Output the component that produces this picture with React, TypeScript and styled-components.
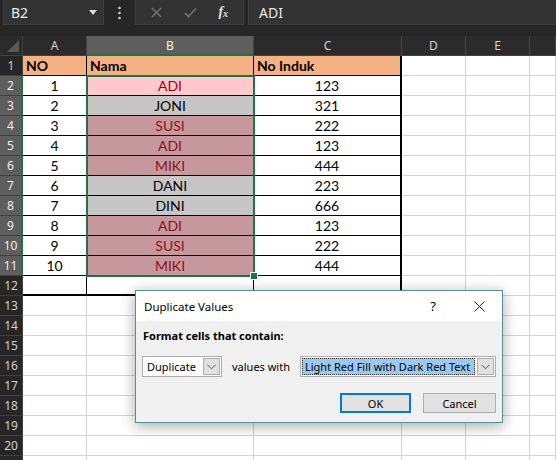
import React from 'react'
import styled, { createGlobalStyle } from 'styled-components'

const GlobalStyle = createGlobalStyle`
  html, body { margin: 0; padding: 0; background: #fff; }
  body { overflow: hidden; }
`

const Page = styled.div`
  width: 556px;
  height: 460px;
  position: relative;
  overflow: hidden;
  background: #fff;
  font-family: Lato, "Liberation Sans", sans-serif;
`

/* formula bar */
const FormulaBar = styled.div`
  height: 36px;
  background: #262626;
  display: flex;
  align-items: flex-start;
  padding-left: 3px;
  box-sizing: border-box;
  font-family: "Noto Sans", sans-serif;
`
const NameBox = styled.div`
  width: 101px;
  height: 25px;
  box-sizing: border-box;
  background: #333;
  border: 1px solid #3d3d3d;
  border-top: none;
  display: flex;
  align-items: center;
  justify-content: space-between;
  padding: 0 6px 0 7px;
  color: #e8e8e8;
  font-size: 14px;
`
const Kebab = styled.div`
  width: 31px;
  height: 25px;
  display: flex;
  align-items: center;
  justify-content: center;
`
const FxGroup = styled.div`
  width: 109px;
  height: 25px;
  box-sizing: border-box;
  background: #333;
  border: 1px solid #3d3d3d;
  border-top: none;
  display: flex;
  align-items: center;
  justify-content: space-around;
  padding: 0 4px;
`
const FxText = styled.span`
  font-family: "Liberation Serif", serif;
  font-style: italic;
  font-weight: bold;
  color: #e0e0e0;
  font-size: 14px;
  sub { font-size: 10px; vertical-align: -1px; }
`
const FormulaInput = styled.div`
  flex: 1;
  margin-left: 4px;
  height: 25px;
  box-sizing: border-box;
  background: #333;
  border-left: 1px solid #3d3d3d;
  border-bottom: 1px solid #3d3d3d;
  display: flex;
  align-items: center;
  padding-left: 10px;
  color: #e8e8e8;
  font-size: 14px;
`

/* sheet */
const Sheet = styled.div`
  position: relative;
  display: grid;
  grid-template-columns: 23px 64px 167px 148px 64px 64px 1fr;
  grid-auto-rows: 20px;
`
const Corner = styled.div`
  background: #2b2b2b;
  border-right: 1px solid #3f3f3f;
  border-bottom: 1px solid #3f3f3f;
  box-sizing: border-box;
  display: flex;
  align-items: flex-end;
  justify-content: flex-end;
  padding: 0 3px 3px 0;
`
const ColHead = styled.div<{ $selected?: boolean }>`
  box-sizing: border-box;
  background: ${(p) => (p.$selected ? '#5e5e5e' : '#2b2b2b')};
  color: ${(p) => (p.$selected ? '#f4f4f4' : '#d2d2d2')};
  border-right: 1px solid #444;
  border-bottom: ${(p) => (p.$selected ? '2px solid #217346' : '1px solid #3f3f3f')};
  display: flex;
  align-items: center;
  justify-content: center;
  font-family: "Noto Sans", sans-serif;
  font-size: 12px;
`
const RowHead = styled.div<{ $selected?: boolean }>`
  box-sizing: border-box;
  background: ${(p) => (p.$selected ? '#5e5e5e' : '#262626')};
  color: ${(p) => (p.$selected ? '#f0f0f0' : '#cfcfcf')};
  border-right: ${(p) => (p.$selected ? '2px solid #217346' : '1px solid #3f3f3f')};
  border-bottom: 1px solid #404040;
  display: flex;
  align-items: center;
  justify-content: center;
  font-family: "Noto Sans", sans-serif;
  font-size: 12px;
`
const Cell = styled.div<{
  $fill?: string
  $color?: string
  $align?: 'left' | 'center'
  $bold?: boolean
  $table?: boolean
  $thickRight?: boolean
  $thickBottom?: boolean
}>`
  box-sizing: border-box;
  background: ${(p) => p.$fill || '#fff'};
  color: ${(p) => p.$color || '#000'};
  font-weight: ${(p) => (p.$bold ? 700 : 400)};
  font-size: 14px;
  display: flex;
  align-items: center;
  justify-content: ${(p) => (p.$align === 'left' ? 'flex-start' : 'center')};
  padding-left: ${(p) => (p.$align === 'left' ? '3px' : '0')};
  border-right: ${(p) =>
    p.$thickRight ? '2px solid #000' : p.$table ? '1px solid #000' : '1px solid #d4d4d4'};
  border-bottom: ${(p) =>
    p.$thickBottom ? '2px solid #000' : p.$table ? '1px solid #000' : '1px solid #d4d4d4'};
  white-space: nowrap;
  overflow: hidden;
`
const Selection = styled.div`
  position: absolute;
  left: 86px;
  top: 39px;
  width: 169px;
  height: 202px;
  box-sizing: border-box;
  border: 2px solid #217346;
  pointer-events: none;
`
const FillHandle = styled.div`
  position: absolute;
  right: -5px;
  bottom: -5px;
  width: 6px;
  height: 6px;
  background: #217346;
  border: 1px solid #fff;
`

/* dialog */
const Dialog = styled.div`
  position: absolute;
  left: 135px;
  top: 290px;
  width: 368px;
  height: 133px;
  box-sizing: border-box;
  border: 1px solid #548f98;
  background: #f0f0f0;
  box-shadow: 0 3px 14px rgba(0, 0, 0, 0.35);
  display: flex;
  flex-direction: column;
  font-family: "Noto Sans", sans-serif;
  font-size: 11px;
  color: #000;
`
const TitleBar = styled.div`
  height: 30px;
  flex-shrink: 0;
  background: #fff;
  display: flex;
  align-items: center;
  padding-left: 8px;
`
const Title = styled.div`
  flex: 1;
  font-size: 11.5px;
`
const TitleBtn = styled.div`
  width: 46px;
  height: 30px;
  display: flex;
  align-items: center;
  justify-content: center;
  font-size: 13px;
`
const Body = styled.div`
  flex: 1;
  display: flex;
  flex-direction: column;
  padding: 7px 6px 0 6px;
`
const Label = styled.div`
  font-weight: 700;
  padding-left: 1px;
  line-height: 16px;
`
const FieldRow = styled.div`
  margin-top: 12px;
  display: flex;
  align-items: center;
`
const Select = styled.div<{ $width: number }>`
  width: ${(p) => p.$width}px;
  height: 21px;
  box-sizing: border-box;
  background: #fff;
  border: 1px solid #adadad;
  display: flex;
  align-items: stretch;
  padding: 1px;
`
const SelectValue = styled.div<{ $highlight?: boolean }>`
  flex: 1;
  display: flex;
  align-items: center;
  padding-left: 3px;
  margin-right: 2px;
  background: ${(p) => (p.$highlight ? '#99c9ef' : 'transparent')};
  outline: ${(p) => (p.$highlight ? '1px dotted #333' : 'none')};
  outline-offset: -1px;
  white-space: nowrap;
`
const DropBtn = styled.div`
  width: 17px;
  box-sizing: border-box;
  background: #e1e1e1;
  border: 1px solid #adadad;
  display: flex;
  align-items: center;
  justify-content: center;
`
const InlineText = styled.span`
  margin: 0 10px;
`
const ButtonRow = styled.div`
  margin-top: 16px;
  display: flex;
  justify-content: flex-end;
  gap: 12px;
`
const Button = styled.div<{ $primary?: boolean; $width: number }>`
  width: ${(p) => p.$width}px;
  height: 20px;
  box-sizing: border-box;
  background: #e1e1e1;
  border: ${(p) => (p.$primary ? '2px solid #0078d7' : '1px solid #adadad')};
  display: flex;
  align-items: center;
  justify-content: center;
`

const Chevron = () => (
  <svg width="9" height="6" viewBox="0 0 9 6">
    <polyline points="0.5,0.8 4.5,4.8 8.5,0.8" fill="none" stroke="#555" strokeWidth="1" />
  </svg>
)

type Kind = 'active' | 'plain' | 'dup'
const data: [number, string, number, Kind][] = [
  [1, 'ADI', 123, 'active'],
  [2, 'JONI', 321, 'plain'],
  [3, 'SUSI', 222, 'dup'],
  [4, 'ADI', 123, 'dup'],
  [5, 'MIKI', 444, 'dup'],
  [6, 'DANI', 223, 'plain'],
  [7, 'DINI', 666, 'plain'],
  [8, 'ADI', 123, 'dup'],
  [9, 'SUSI', 222, 'dup'],
  [10, 'MIKI', 444, 'dup'],
]

const fills: Record<Kind, { fill: string; color: string }> = {
  active: { fill: '#ffc7ce', color: '#9c0006' },
  plain: { fill: '#c6c6c6', color: '#000' },
  dup: { fill: '#c6989d', color: '#8c1018' },
}

const cols = ['A', 'B', 'C', 'D', 'E', '']

function EmptyCells() {
  return (
    <>
      <Cell />
      <Cell />
      <Cell />
    </>
  )
}

export default function App() {
  const rows: React.ReactNode[] = []

  rows.push(
    <React.Fragment key="r1">
      <RowHead>1</RowHead>
      <Cell $fill="#f4b183" $bold $align="left" $table>NO</Cell>
      <Cell $fill="#f4b183" $bold $align="left" $table>Nama</Cell>
      <Cell $fill="#f4b183" $bold $align="left" $thickRight $table>No Induk</Cell>
      <EmptyCells />
    </React.Fragment>
  )

  data.forEach(([no, name, induk, kind], i) => (
    rows.push(
      <React.Fragment key={'d' + i}>
        <RowHead $selected>{i + 2}</RowHead>
        <Cell $table>{no}</Cell>
        <Cell $table $fill={fills[kind].fill} $color={fills[kind].color}>{name}</Cell>
        <Cell $table $thickRight>{induk}</Cell>
        <EmptyCells />
      </React.Fragment>
    )
  ))

  rows.push(
    <React.Fragment key="r12">
      <RowHead>12</RowHead>
      <Cell $table $thickBottom />
      <Cell $table $thickBottom />
      <Cell $table $thickBottom $thickRight />
      <EmptyCells />
    </React.Fragment>
  )

  for (let r = 13; r <= 21; r++) {
    rows.push(
      <React.Fragment key={'e' + r}>
        <RowHead>{r <= 20 ? r : ''}</RowHead>
        <Cell />
        <Cell />
        <Cell />
        <EmptyCells />
      </React.Fragment>
    )
  }

  return (
    <Page>
      <GlobalStyle />
      <FormulaBar>
        <NameBox>
          <span>B2</span>
          <svg width="8" height="5" viewBox="0 0 8 5">
            <polygon points="0,0 8,0 4,5" fill="#dcdcdc" />
          </svg>
        </NameBox>
        <Kebab>
          <svg width="3" height="14" viewBox="0 0 3 14">
            <circle cx="1.5" cy="2" r="1.3" fill="#cfcfcf" />
            <circle cx="1.5" cy="7" r="1.3" fill="#cfcfcf" />
            <circle cx="1.5" cy="12" r="1.3" fill="#cfcfcf" />
          </svg>
        </Kebab>
        <FxGroup>
          <svg width="11" height="11" viewBox="0 0 11 11">
            <path d="M1 1 L10 10 M10 1 L1 10" stroke="#6f6f6f" strokeWidth="1.6" />
          </svg>
          <svg width="13" height="11" viewBox="0 0 13 11">
            <path d="M1 6 L4.5 9.5 L12 1.5" fill="none" stroke="#6f6f6f" strokeWidth="1.8" />
          </svg>
          <FxText>
            f<sub>x</sub>
          </FxText>
        </FxGroup>
        <FormulaInput>ADI</FormulaInput>
      </FormulaBar>

      <Sheet>
        <Corner>
          <svg width="12" height="12" viewBox="0 0 12 12">
            <polygon points="12,0 12,12 0,12" fill="#5a5a5a" />
          </svg>
        </Corner>
        {cols.map((c) => (
          <ColHead key={c || 'f'} $selected={c === 'B'}>{c}</ColHead>
        ))}
        {rows}
        <Selection>
          <FillHandle />
        </Selection>
      </Sheet>

      <Dialog>
        <TitleBar>
          <Title>Duplicate Values</Title>
          <TitleBtn>?</TitleBtn>
          <TitleBtn>
            <svg width="11" height="11" viewBox="0 0 11 11">
              <path d="M0.5 0.5 L10.5 10.5 M10.5 0.5 L0.5 10.5" stroke="#222" strokeWidth="1" />
            </svg>
          </TitleBtn>
        </TitleBar>
        <Body>
          <Label>Format cells that contain:</Label>
          <FieldRow>
            <Select $width={80}>
              <SelectValue>Duplicate</SelectValue>
              <DropBtn>
                <Chevron />
              </DropBtn>
            </Select>
            <InlineText>values with</InlineText>
            <Select $width={196}>
              <SelectValue $highlight>Light Red Fill with Dark Red Text</SelectValue>
              <DropBtn>
                <Chevron />
              </DropBtn>
            </Select>
          </FieldRow>
          <ButtonRow>
            <Button $primary $width={71}>OK</Button>
            <Button $width={73}>Cancel</Button>
          </ButtonRow>
        </Body>
      </Dialog>
    </Page>
  )
}
